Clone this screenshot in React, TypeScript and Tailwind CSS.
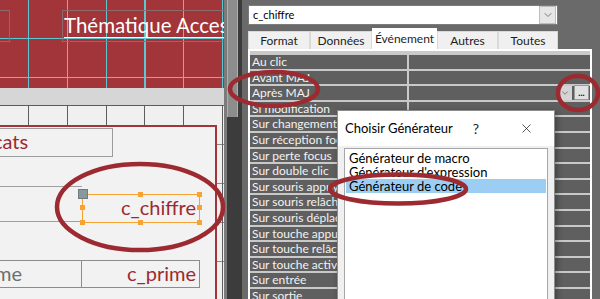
import { ChevronDown, X } from 'lucide-react';

const eventProps = [
  'Au clic',
  'Avant MAJ',
  'Après MAJ',
  'Si modification',
  'Sur changement',
  'Sur réception focus',
  'Sur perte focus',
  'Sur double clic',
  'Sur souris appuyée',
  'Sur souris relâchée',
  'Sur souris déplacée',
  'Sur touche appuyée',
  'Sur touche relâchée',
  'Sur touche activée',
  'Sur entrée',
  'Sur sortie',
];

const tabs = [
  { label: 'Format', width: 'w-[62px]' },
  { label: 'Données', width: 'w-[62px]' },
  { label: 'Événement', width: 'w-[65px]', active: true },
  { label: 'Autres', width: 'w-[61px]' },
  { label: 'Toutes', width: 'w-[60px]' },
];

function Handle({ className }: { className: string }) {
  return <span className={`absolute h-[5px] w-[5px] bg-[#f7a334] ${className}`} />;
}

function FormDesign() {
  return (
    <div className="flex w-[224px] shrink-0 flex-col overflow-hidden bg-[#f0f0f0]">
      {/* form header with its design grid */}
      <div className="flex h-[88px] shrink-0 bg-[#a13539] bg-[repeating-linear-gradient(90deg,transparent_0_28px,#5ec6d1_28px_29.2px,transparent_29.2px_38.8px),repeating-linear-gradient(180deg,transparent_0_38px,#5ec6d1_38px_39.2px,transparent_39.2px_39px)] pt-[10px]">
        <div className="-ml-px h-[32px] w-[11px] border border-[#8e6a6c]" />
        <div className="ml-[52px] h-[32px] flex-1 overflow-hidden whitespace-nowrap border border-r-0 border-[#8e6a6c] pl-[1px] text-[20.5px] leading-[28px] text-white">
          <span className="underline decoration-1 underline-offset-[4px]">Thématique Access</span>
        </div>
      </div>

      {/* section bar */}
      <div className="h-[18px] shrink-0 border-b border-[#5c5c5c] bg-[#d6d6d6]" />

      {/* detail section */}
      <div className="flex flex-1 flex-col bg-[#f0f0f0] bg-[repeating-linear-gradient(90deg,transparent_0_28px,#5c5c5c_28px_29px,transparent_29px_38.8px),repeating-linear-gradient(180deg,transparent_0_38px,#8a8a8a_38px_39px,transparent_39px_39px)]">
        <div className="h-[19px] shrink-0" />
        <div className="-ml-[2px] flex w-[219px] flex-1 flex-col border-2 border-b-0 border-[#a13539] bg-[#f2f2f2]">
          <div className="mt-px -ml-px flex h-[29px] w-[114px] overflow-hidden whitespace-nowrap border border-[#9c9c9c] text-[20px] leading-[25px] text-[#9d2a2f]">
            <span className="-ml-[7px] block shrink-0">cats</span>
          </div>

          <div className="mt-[29px] flex items-start">
            <div className="-ml-px h-[36px] w-[83px] border-y border-[#a0a0a0]" />
            <div className="relative mt-[8px] h-[29px] w-[118px] border border-[#f7a334] pr-[3px] text-right text-[20px] leading-[25px] text-[#9d2a2f]">
              c_chiffre
              <span className="absolute -left-[5px] -top-[6px] h-[10px] w-[10px] border border-[#6e7b80] bg-[#8a979c]" />
              <Handle className="left-[55px] -top-[3px]" />
              <Handle className="-right-[3px] -top-[3px]" />
              <Handle className="-left-[3px] top-[10px]" />
              <Handle className="-right-[3px] top-[10px]" />
              <Handle className="-left-[3px] -bottom-[3px]" />
              <Handle className="left-[55px] -bottom-[3px]" />
              <Handle className="-right-[3px] -bottom-[3px]" />
            </div>
          </div>

          <div className="mt-[37px] flex">
            <div className="-ml-px flex h-[28px] w-[83px] overflow-hidden whitespace-nowrap border border-[#8c8c8c] text-[20px] leading-[24px] text-[#6e6e6e]">
              <span className="-ml-[5px] block shrink-0">me</span>
            </div>
            <div className="-ml-px h-[28px] w-[119px] border border-[#8c8c8c] pr-[3px] text-right text-[20px] leading-[24px] text-[#9d2a2f]">
              c_prime
            </div>
          </div>
        </div>
      </div>
    </div>
  );
}

function PropertySheet() {
  return (
    <div className="flex flex-1 flex-col pl-[6px] pt-[5px]">
      <div className="flex h-[22px] w-[310px] items-center border border-[#7c7c7c] bg-white">
        <span className="pl-[4px] text-[11px] text-black">c_chiffre</span>
        <span className="ml-auto mr-px flex h-[18px] w-[17px] items-center justify-center border border-[#bcbcbc] bg-[#e6e6e6]">
          <ChevronDown size={12} strokeWidth={1.5} className="text-[#555]" />
        </span>
      </div>

      <div className="mt-[3px] flex h-[21px] items-end">
        {tabs.map((t) => (
          <div
            key={t.label}
            className={`${t.width} flex items-center justify-center text-[12px] text-[#1e1e1e] ${
              t.active ? 'h-[21px] bg-white' : 'h-[18px] border border-b-0 border-[#d9d9d9] bg-[#f0f0f0]'
            }`}
          >
            {t.label}
          </div>
        ))}
      </div>

      <div className="flex w-[344px] flex-1 flex-col gap-[2px] border-x-2 border-t-2 border-white bg-[#c9c9c9] pt-[4px]">
        {eventProps.map((p) => (
          <div key={p} className="flex h-[13.6px] shrink-0 gap-[2px]">
            <div className="w-[157px] overflow-hidden whitespace-nowrap bg-[#5f5f5f] pl-[2px] text-[12px] leading-[13.6px] text-[#f2f2f2]">
              {p}
            </div>
            <div className="flex flex-1 items-stretch justify-end bg-[#5f5f5f]">
              {p === 'Après MAJ' && (
                <>
                  <span className="flex w-[14px] items-center justify-center bg-[#d4d4d4]">
                    <ChevronDown size={10} strokeWidth={1.5} className="text-[#444]" />
                  </span>
                  <span className="ml-[2px] mr-px -mt-px flex h-[15px] w-[15px] items-center justify-center border border-[#9a9a9a] bg-[#e1e1e1] text-[9px] font-bold leading-none text-black">
                    ...
                  </span>
                </>
              )}
            </div>
          </div>
        ))}
      </div>
    </div>
  );
}

function BuilderDialog() {
  return (
    <div className="absolute left-[337px] top-[110px] flex h-[200px] w-[218px] flex-col border border-[#8c8c8c] bg-[#f0f0f0] shadow-[2px_2px_6px_rgba(0,0,0,0.35)]">
      <div className="flex h-[35px] items-center bg-white pl-[7px] text-[13px] text-black">
        <span>Choisir Générateur</span>
        <span className="ml-auto mr-[40px] text-[14px] text-[#222]">?</span>
        <X size={15} strokeWidth={1.2} className="mr-[20px] text-[#222]" />
      </div>
      <div className="px-[6px] pt-[2px]">
        <div className="h-[160px] border border-[#a7a7a7] bg-white px-px pt-[2px] text-[13px] leading-[14px] text-black">
          <div className="pl-[3px]">Générateur de macro</div>
          <div className="pl-[3px]">Générateur d'expression</div>
          <div className="bg-[#9ccdf3] pl-[3px]">Générateur de code</div>
        </div>
      </div>
    </div>
  );
}

export default function App() {
  return (
    <div className="relative flex h-[299px] w-[600px] overflow-hidden bg-[#6a6a6a] font-['Lato',sans-serif]">
      <FormDesign />

      {/* vertical scrollbar of the design view */}
      <div className="flex w-[18px] shrink-0 flex-col border-l-[3px] border-[#7b7b7b] bg-[#3c3c3c] pr-[4px]">
        <div className="h-[117px] border-x border-[#adadad] bg-[#8d8d8d]" />
      </div>

      <PropertySheet />
      <BuilderDialog />

      {/* red annotation circles */}
      <svg className="pointer-events-none absolute inset-0" width="600" height="299" viewBox="0 0 600 299">
        <g fill="none" stroke="#9c2a30" strokeWidth="4.5">
          <ellipse cx="140" cy="207" rx="83" ry="43" />
          <ellipse cx="274" cy="89" rx="44" ry="17" />
          <ellipse cx="578" cy="93" rx="20" ry="17" />
          <ellipse cx="398" cy="189" rx="68" ry="14.5" />
        </g>
      </svg>
    </div>
  );
}
